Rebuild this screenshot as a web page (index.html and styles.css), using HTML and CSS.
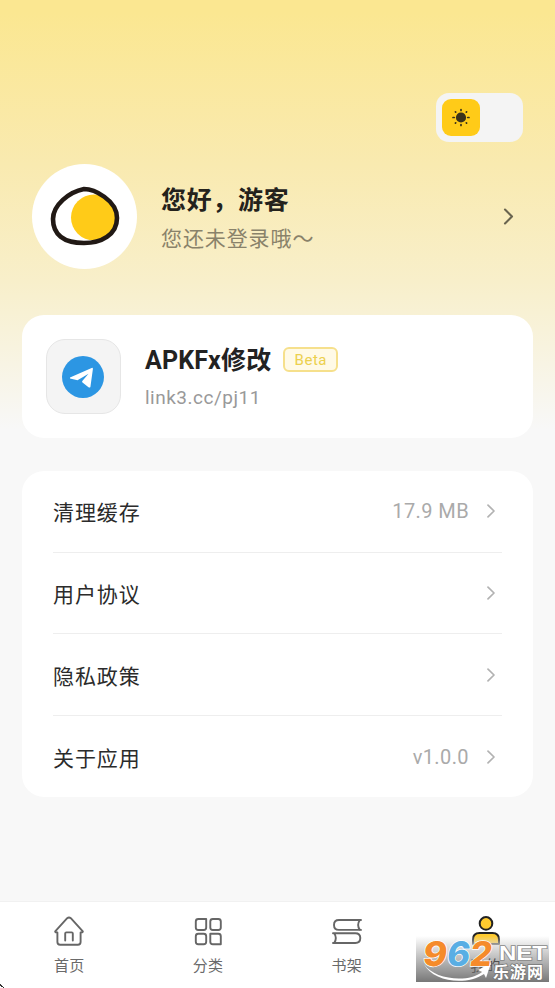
FILE: index.html
```
<!DOCTYPE html>
<html lang="zh-CN">
<head>
<meta charset="utf-8">
<meta name="viewport" content="width=device-width, initial-scale=1">
<title>我的</title>
<link rel="stylesheet" href="styles.css">
</head>
<body>
<div class="app">
  <header class="top">
    <div class="toggle"><div class="knob">
      <svg width="38" height="38" viewBox="0 0 38 38"><circle cx="19" cy="18.5" r="5.1" fill="#39311b"/><g stroke="#39311b" stroke-width="1.7" stroke-linecap="round"><path d="M19 10.500v.9M19 25.600v.9M11 18.500h1.200M25.800 18.500h1.200M13.400 12.900l.3.300M24.300 23.800l.3.300M13.400 24.100l.3-.3M24.300 13.200l.3-.3"/></g></svg>
    </div></div>
  </header>
  <section class="profile">
    <div class="avatar">
      <svg width="105" height="105" viewBox="0 0 105 105"><circle cx="62" cy="53.5" r="23" fill="#ffcb18"/><path d="M52 25C62 25 85 36 85 54C85 71 69 79 52 79C31 79 21 70 21 55C21 41 37 28 52 25Z" fill="none" stroke="#211915" stroke-width="4.600" stroke-linejoin="round"/></svg>
    </div>
    <div class="who"><div class="hello">您好，游客</div><div class="status">您还未登录哦～</div></div>
    <svg class="go" width="14" height="20" viewBox="0 0 14 20"><path d="M3 2.500l7 6.900L3 16.400" fill="none" stroke="#69644f" stroke-width="2.100" stroke-linecap="round" stroke-linejoin="round"/></svg>
  </section>
  <section class="card promo">
    <div class="logo">
      <svg width="42" height="42" viewBox="0 0 42 42"><circle cx="21" cy="21" r="21" fill="#2c96e3"/><path d="M8 21.500L30.200 11.800Q31 11.800 30.900 13L28.400 31Q27.800 32 26.500 31.200L20.500 26.600Q19.500 25.800 20.500 24.700L26.500 17.800L15.500 24.200L8 22.500Z" fill="#fff"/></svg>
    </div>
    <div class="info">
      <div class="title"><span class="name">APKFx修改</span><span class="beta">Beta</span></div>
      <div class="link">link3.cc/pj11</div>
    </div>
  </section>
  <section class="card list">
    <div class="row"><span>清理缓存</span><span class="val">17.9 MB</span><svg class="chev" viewBox="0 0 10 14"><path d="M2 1.2L8 7l-6 5.8"/></svg></div>
    <div class="row"><span>用户协议</span><span class="val"></span><svg class="chev" viewBox="0 0 10 14"><path d="M2 1.2L8 7l-6 5.8"/></svg></div>
    <div class="row"><span>隐私政策</span><span class="val"></span><svg class="chev" viewBox="0 0 10 14"><path d="M2 1.2L8 7l-6 5.8"/></svg></div>
    <div class="row"><span>关于应用</span><span class="val">v1.0.0</span><svg class="chev" viewBox="0 0 10 14"><path d="M2 1.2L8 7l-6 5.8"/></svg></div>
  </section>
  <nav class="tabs">
    <div class="tab">
      <svg viewBox="0 0 32 32"><path d="M2.200 16.300L14.200 3.200q1.800-1.600 3.600 0L29.800 16.300q.2 1-1.200 1.100h-1V27q0 2.700-2.700 2.700H7.100Q4.400 29.700 4.400 27V17.400h-1q-1.400-.1-1.200-1.100zM12.200 25.600v-7q0-1.200 1.200-1.200h5.200q1.200 0 1.200 1.200v7"/></svg>
      <span>首页</span></div>
    <div class="tab">
      <svg viewBox="0 0 32 32"><path d="M6.300 4h7.900v8.500q0 2.500-2.500 2.500H6.300q-2.500 0-2.500-2.500v-6q0-2.500 2.500-2.500zM20.800 4h5.500q2.500 0 2.500 2.500v6q0 2.500-2.500 2.500h-5.500q-2.500 0-2.500-2.500v-6q0-2.500 2.500-2.500zM6.300 18.800h5.400q2.500 0 2.500 2.500v5.500q0 2.500-2.500 2.500H6.300q-2.500 0-2.500-2.500v-5.500q0-2.500 2.500-2.500zM18.300 18.800h8q2.500 0 2.500 2.500v8h-8q-2.500 0-2.500-2.500z"/></svg>
      <span>分类</span></div>
    <div class="tab">
      <svg viewBox="0 0 32 32"><path d="M30 5H8Q3 5 3 10t5 4.900h22M28.800 5q-3.300 5 0 9.900M2 18.200h22.300q5 0 5 4.900t-5 4.900H2M3.200 18.200q3.300 4.900 0 9.800"/></svg>
      <span>书架</span></div>
    <div class="tab on">
      <svg viewBox="0 0 32 32"><circle cx="16" cy="8.400" r="6.300"/><path d="M3 29v-4.500q0-6.500 6.500-6.500h13q6.500 0 6.500 6.500V29z"/></svg>
      <span>我的</span></div>
  </nav>
  <svg class="mark" width="139" height="52" viewBox="0 -5 139 52">
    <defs>
      <linearGradient id="shade" x1="0" y1="0" x2="0" y2="1"><stop offset="0" stop-color="#777" stop-opacity="0"/><stop offset=".5" stop-color="#777" stop-opacity=".5"/><stop offset="1" stop-color="#707070" stop-opacity=".95"/></linearGradient>
      <linearGradient id="fade" x1="0" y1="0" x2="0" y2="1"><stop offset="0" stop-color="#fff" stop-opacity="0"/><stop offset="1" stop-color="#fff" stop-opacity=".7"/></linearGradient>
    </defs>
    <rect x="54" y="0" width="32" height="10" fill="url(#fade)"/>
    <rect width="133" height="46" fill="url(#shade)"/>
    <path d="M8 28C18 44 53 47 66 36L62 34L75 27L70 42L68 38C50 50 17 46 8 28Z" fill="#fff"/>
    <g class="digits" transform="skewX(-8)">
      <text x="10" y="30" textLength="24" lengthAdjust="spacingAndGlyphs" fill="#f58b2b">9</text>
      <text x="34" y="30" textLength="23" lengthAdjust="spacingAndGlyphs" fill="#59aee4">6</text>
      <text x="57" y="30" textLength="22" lengthAdjust="spacingAndGlyphs" fill="#f58b2b">2</text>
    </g>
    <text class="net" x="83" y="24" textLength="48" lengthAdjust="spacingAndGlyphs">NET</text>
    <text class="site" x="77" y="42" textLength="50">乐游网</text>
  </svg>
  <svg class="speck" width="4" height="4" viewBox="0 0 4 4"><path d="M0 0h1v1h1v1h1v1h1v1H3V3H1V2H0z" fill="#333"/></svg>
</div>
</body>
</html>
```
FILE: styles.css
```
* { box-sizing: border-box; }
body { margin: 0; font-family: Roboto, "Noto Sans CJK SC", sans-serif; color: #2b2b2b; }
.app {
  position: relative; display: flex; flex-direction: column; height: 988px; overflow: hidden;
  background: linear-gradient(180deg, #fbe791 0, #fbe791 12px, #f9eab0 165px, #f8efca 280px, #f8f8f8 430px, #f8f8f8 100%);
}
.top { display: flex; justify-content: flex-end; padding: 93px 32px 0 0; }
.toggle { width: 87px; height: 49px; padding: 6px; border-radius: 13px; background: #f4f4f4; }
.knob { width: 38px; height: 37px; border-radius: 9px; background: #ffcb18; overflow: hidden; }
.profile { display: flex; align-items: center; height: 105px; margin: 22px 39px 0 32px; }
.avatar { width: 105px; height: 105px; border-radius: 50%; background: #fff; }
.avatar svg, .logo svg { display: block; }
.logo svg { margin-right: 1px; }
.who { flex: 1; margin-left: 24px; padding-top: 4px; }
.hello { font-size: 25px; line-height: 38px; font-weight: 700; letter-spacing: .7px; color: #24221c; }
.status { margin-top: 2px; font-size: 21px; line-height: 34px; letter-spacing: .9px; color: #89826a; }
.card { margin: 0 22px; background: #fff; border-radius: 22px; }
.promo { display: flex; align-items: center; height: 123px; margin-top: 46px; padding-left: 24px; }
.logo { display: flex; align-items: center; justify-content: center; width: 75px; height: 75px; border: 1px solid #e6e6e6; border-radius: 19px; background: #f4f4f4; }
.info { margin-left: 24px; padding-top: 1px; }
.title { display: flex; align-items: center; height: 38px; }
.name { font-size: 25px; font-weight: 700; letter-spacing: .15px; line-height: 38px; color: #222; }
.beta { width: 55px; height: 25px; margin: -2px 0 0 12px; border: 2px solid #f6e08c; border-radius: 6px; background: #fffae7; color: #ecd04e; font-size: 15px; line-height: 22px; letter-spacing: .5px; text-align: center; }
.link { margin-top: 3px; font-size: 19px; line-height: 30px; letter-spacing: .5px; color: #999; }
.list { height: 326px; margin-top: 33px; padding: 0 31px 0 31px; }
.row { display: flex; align-items: center; height: 81.700px; border-bottom: 1.500px solid #eee; font-size: 21px; letter-spacing: .9px; }
.row:last-child { border-bottom: 0; height: 80.900px; }
.val { margin-left: auto; margin-right: 17px; font-size: 20px; letter-spacing: .4px; color: #aaa; }
.chev { width: 10px; height: 14px; margin-right: 6px; fill: none; stroke: #b2b2b2; stroke-width: 1.700; stroke-linecap: round; stroke-linejoin: round; }
.tabs { display: flex; height: 87px; margin-top: auto; padding-top: 13px; border-top: 1px solid #f1f1f1; background: #fff; }
.tab { flex: 1; display: flex; flex-direction: column; align-items: center; font-size: 15px; line-height: 22px; letter-spacing: .3px; color: #6a6a6a; }
.tab svg { width: 32px; height: 32px; margin-bottom: 8px; fill: none; stroke: #666; stroke-width: 1.900; stroke-linecap: round; stroke-linejoin: round; }
.tab.on { color: #222; }
.tab.on svg { fill: #ffcb2f; stroke: #222; stroke-width: 2; }
.mark { position: absolute; left: 416px; top: 931px; overflow: visible; }
.digits text { font: 800 34px Inter, sans-serif; stroke: #fff; stroke-width: 1.500px; paint-order: stroke; }
.net { font: 700 20px "Liberation Sans", sans-serif; fill: #fff; stroke: #888; stroke-width: 1.500px; paint-order: stroke; }
.site { font: 700 16px "Noto Sans CJK SC", sans-serif; fill: #fff; stroke: #777; stroke-width: 1.500px; paint-order: stroke; }
.speck { position: absolute; left: 0; bottom: 0; }
```
